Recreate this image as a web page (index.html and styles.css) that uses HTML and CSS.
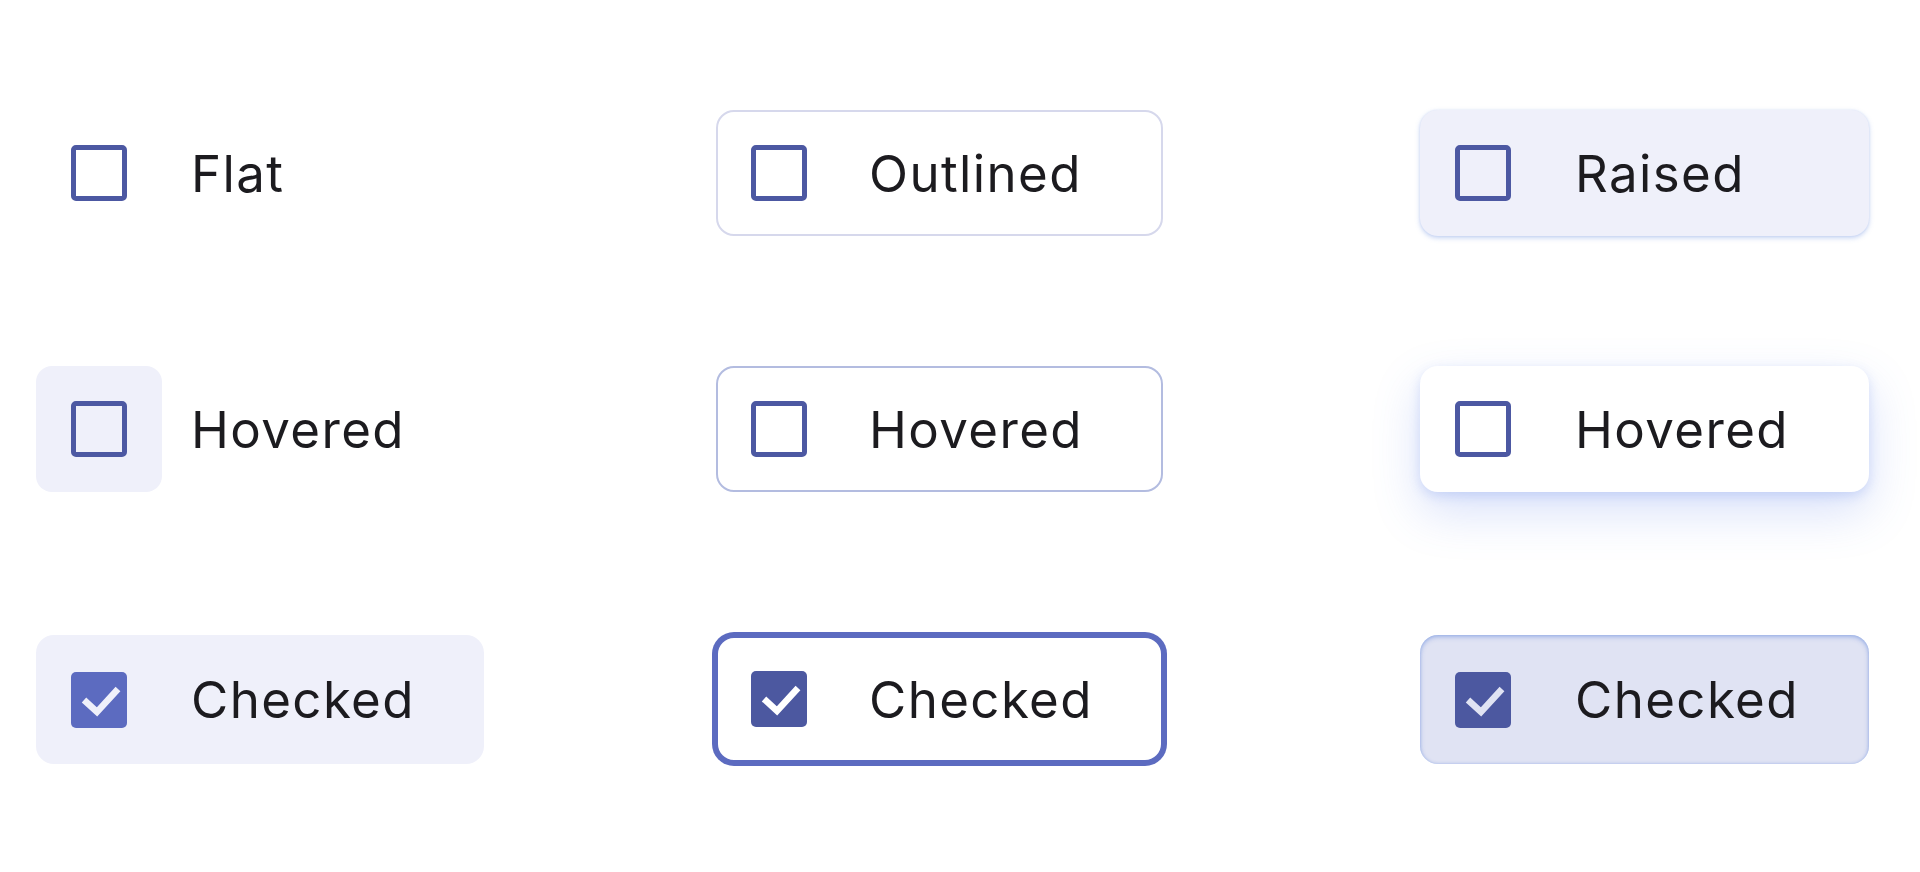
FILE: index.html
```html
<!DOCTYPE html>
<html lang="en">
<head>
    <meta charset="UTF-8">
    <meta name="viewport" content="width=device-width, initial-scale=1.0">
    <title>Checkbox variants</title>
    <link rel="stylesheet" href="styles.css">
</head>
<body>

    <div class="board">

        <!-- Row 1: resting -->
        <label class="check check--flat">
            <span class="check-target"><span class="check-box"></span></span>
            <span class="check-label">Flat</span>
        </label>
        <label class="check check--outlined">
            <span class="check-target"><span class="check-box"></span></span>
            <span class="check-label">Outlined</span>
        </label>
        <label class="check check--raised">
            <span class="check-target"><span class="check-box"></span></span>
            <span class="check-label">Raised</span>
        </label>

        <!-- Row 2: hovered -->
        <label class="check check--flat is-hover">
            <span class="check-target"><span class="check-box"></span></span>
            <span class="check-label">Hovered</span>
        </label>
        <label class="check check--outlined is-hover">
            <span class="check-target"><span class="check-box"></span></span>
            <span class="check-label">Hovered</span>
        </label>
        <label class="check check--raised is-hover">
            <span class="check-target"><span class="check-box"></span></span>
            <span class="check-label">Hovered</span>
        </label>

        <!-- Row 3: checked -->
        <label class="check check--flat is-checked">
            <span class="check-target">
                <span class="check-box">
                    <svg viewBox="0 0 56 56"><polyline points="13,28 26,40 47,17"/></svg>
                </span>
            </span>
            <span class="check-label">Checked</span>
        </label>
        <label class="check check--outlined is-checked">
            <span class="check-target">
                <span class="check-box">
                    <svg viewBox="0 0 56 56"><polyline points="13,28 26,40 47,17"/></svg>
                </span>
            </span>
            <span class="check-label">Checked</span>
        </label>
        <label class="check check--raised is-checked">
            <span class="check-target">
                <span class="check-box">
                    <svg viewBox="0 0 56 56"><polyline points="13,28 26,40 47,17"/></svg>
                </span>
            </span>
            <span class="check-label">Checked</span>
        </label>

    </div>

</body>
</html>
```

FILE: styles.css
```css
body {
    margin: 0;
    min-height: 872px;
    background: #ffffff;
    font-family: Inter, "Noto Sans", sans-serif;
    color: #1c1b1f;
}

.board {
    display: grid;
    grid-template-columns: 680px 704px 449px;
    grid-template-rows: 256px 269px 130px;
    align-items: start;
    padding: 110px 0 100px 36px;
}

/* Base checkbox row */
.check {
    display: flex;
    align-items: center;
    gap: 29px;
    height: 126px;
    box-sizing: border-box;
    border-radius: 18px;
    cursor: pointer;
}

.check-target {
    display: flex;
    padding: 35px;
    border-radius: 16px;
}

.check-box {
    display: flex;
    width: 56px;
    height: 56px;
    box-sizing: border-box;
    border: 5px solid #4c58a2;
    border-radius: 5px;
}

.check-label {
    font-size: 51px;
    letter-spacing: 1.4px;
    line-height: 1;
}

/* Checked box */
.is-checked .check-box {
    border: none;
    background-color: #4c58a0;
}

.check-box svg {
    width: 56px;
    height: 56px;
}

.check-box polyline {
    fill: none;
    stroke: #ffffff;
    stroke-width: 6.5;
}

/* Flat */
.check--flat.is-hover .check-target {
    background-color: #eff0fa;
}

.check--flat.is-checked {
    width: 448px;
    height: 129px;
    background-color: #eff0fa;
}

.check--flat.is-checked .check-box {
    background-color: #5c6bc0;
}

.check--flat.is-checked polyline {
    stroke: #eff0fa;
}

/* Outlined */
.check--outlined {
    width: 447px;
    border: 2px solid #d6d8ec;
    background-color: #ffffff;
}

.check--outlined .check-target {
    padding: 33px;
}

.check--outlined.is-hover {
    border-color: #b3bce0;
}

.check--outlined.is-checked {
    margin-top: 1px;
    border-color: #5c6bc0;
    box-shadow: 0 0 0 4px #5c6bc0;
}

/* Raised */
.check--raised {
    width: 449px;
    background-color: #eff0fa;
    box-shadow: 0 2px 5px rgba(90, 130, 220, 0.35), 0 0 2px rgba(90, 130, 220, 0.15);
}

.check--raised.is-hover {
    background-color: #ffffff;
    box-shadow: 0 20px 48px rgba(80, 120, 230, 0.22), 0 4px 12px rgba(80, 120, 230, 0.2);
}

.check--raised.is-checked {
    height: 129px;
    background-color: #e0e3f3;
    box-shadow: inset 0 2px 5px rgba(90, 130, 220, 0.45), inset 0 0 3px rgba(90, 130, 220, 0.35);
}

.check--raised.is-checked polyline {
    stroke: #e0e3f3;
}
```
